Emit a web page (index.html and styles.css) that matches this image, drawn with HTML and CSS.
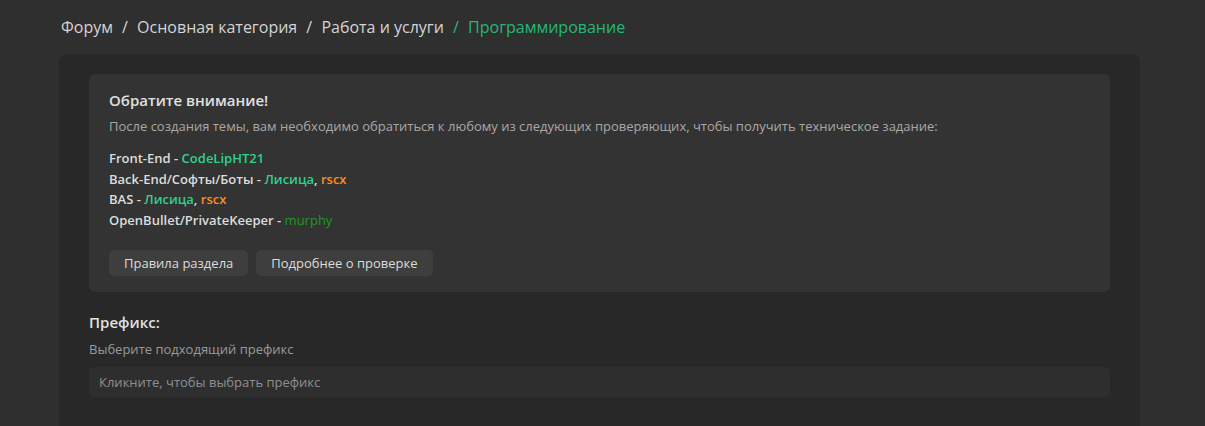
FILE: index.html
```html
<!DOCTYPE html>
<html lang="ru">
<head>
    <meta charset="UTF-8">
    <meta name="viewport" content="width=device-width, initial-scale=1.0">
    <title>Программирование</title>
    <link rel="stylesheet" href="styles.css">
</head>
<body>

    <!-- Breadcrumbs -->
    <div class="breadcrumbs">
        <a href="#">Форум</a>
        <span class="sep">/</span>
        <a href="#">Основная категория</a>
        <span class="sep">/</span>
        <a href="#">Работа и услуги</a>
        <span class="sep current">/</span>
        <span class="current">Программирование</span>
    </div>

    <div class="panel">
        <!-- Notice block -->
        <div class="notice">
            <div class="notice-title">Обратите внимание!</div>
            <div class="notice-text">После создания темы, вам необходимо обратиться к любому из следующих проверяющих, чтобы получить техническое задание:</div>

            <div class="checkers">
                <div>Front-End - <span class="user-teal">CodeLipHT21</span></div>
                <div>Back-End/Софты/Боты - <span class="user-teal">Лисица</span>, <span class="user-orange">rscx</span></div>
                <div>BAS - <span class="user-teal">Лисица</span>, <span class="user-orange">rscx</span></div>
                <div>OpenBullet/PrivateKeeper - <span class="user-green">murphy</span></div>
            </div>

            <div class="buttons">
                <button>Правила раздела</button>
                <button>Подробнее о проверке</button>
            </div>
        </div>

        <!-- Prefix -->
        <div class="field">
            <div class="field-title">Префикс:</div>
            <div class="field-hint">Выберите подходящий префикс</div>
            <input type="text" placeholder="Кликните, чтобы выбрать префикс">
        </div>
    </div>

</body>
</html>
```

FILE: styles.css
```css
body {
    font-family: "Open Sans", sans-serif;
    background-color: #2f2f2f;
    color: #d6d6d6;
    margin: 0;
    padding: 0 65px 0 59px;
    height: 426px;
    overflow: hidden;
}
.breadcrumbs {
    font-size: 16px;
    height: 54px;
    line-height: 54px;
    padding-left: 2px;
    color: #d4d4d4;
}
.breadcrumbs a {
    color: #d4d4d4;
    text-decoration: none;
}
.breadcrumbs .sep {
    margin: 0 5px;
}
.breadcrumbs .current {
    color: #24b874;
}
.panel {
    background: #282828;
    border-radius: 8px;
    padding: 20px 30px 30px;
    min-height: 400px;
}
.notice {
    background: #333333;
    border-radius: 6px;
    padding: 16px 20px 16px;
}
.notice-title {
    font-size: 15px;
    font-weight: 600;
    color: #e0e0e0;
    line-height: 20px;
}
.notice-text {
    font-size: 13px;
    color: #a8a8a8;
    line-height: 20px;
    margin-top: 6px;
}
.checkers {
    margin-top: 12px;
    font-size: 13px;
    font-weight: 600;
    line-height: 20.6px;
    color: #dcdcdc;
}
.user-teal {
    color: #2fd18d;
}
.user-orange {
    color: #ff8c1a;
}
.user-green {
    color: #1c9a1c;
    font-weight: normal;
}
.buttons {
    margin-top: 20px;
    display: flex;
    gap: 8px;
}
button {
    font-family: "Open Sans", sans-serif;
    font-size: 13px;
    color: #dcdcdc;
    background: #3e3e3e;
    border: none;
    border-radius: 5px;
    height: 26px;
    padding: 0 15px;
}
.field {
    margin-top: 20px;
}
.field-title {
    font-size: 15px;
    font-weight: 600;
    color: #e0e0e0;
    line-height: 20px;
}
.field-hint {
    font-size: 13px;
    color: #9a9a9a;
    margin-top: 8px;
    line-height: 18px;
}
input {
    display: block;
    box-sizing: border-box;
    width: 100%;
    height: 30px;
    margin-top: 9px;
    padding: 0 10px;
    font-family: "Open Sans", sans-serif;
    font-size: 13px;
    background: #2e2e2e;
    border: none;
    border-radius: 5px;
    color: #ddd;
}
input::placeholder {
    color: #8e8e8e;
}
```
